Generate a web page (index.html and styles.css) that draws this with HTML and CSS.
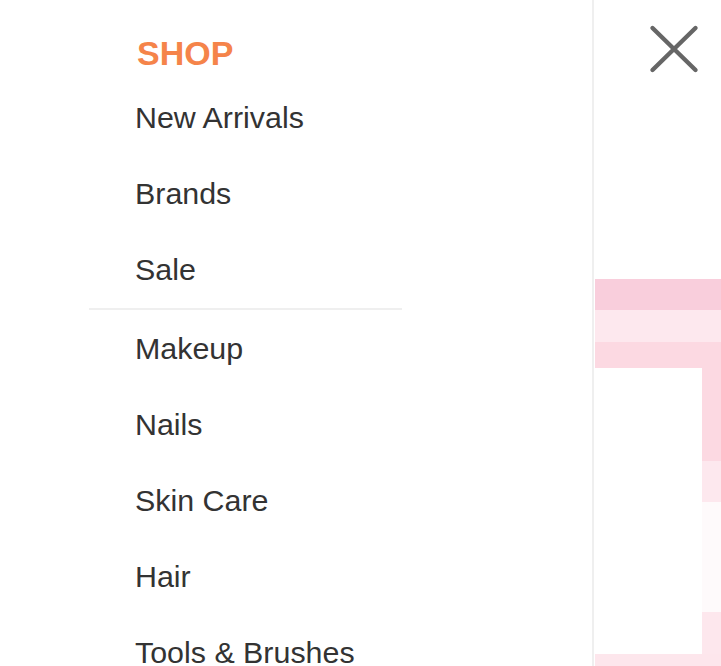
FILE: index.html
```html
<!DOCTYPE html>
<html lang="en">
<head>
    <meta charset="UTF-8"/>
    <title>Shop Menu</title>
    <link rel="stylesheet" href="styles.css">
</head>
<body>
<div class="drawer">
    <nav class="menu-panel">
        <h2 class="menu-title">SHOP</h2>
        <ul class="menu-list">
            <li><a href="#">New Arrivals</a></li>
            <li><a href="#">Brands</a></li>
            <li><a href="#">Sale</a></li>
        </ul>
        <hr class="menu-divider"/>
        <ul class="menu-list">
            <li><a href="#">Makeup</a></li>
            <li><a href="#">Nails</a></li>
            <li><a href="#">Skin Care</a></li>
            <li><a href="#">Hair</a></li>
            <li><a href="#">Tools &amp; Brushes</a></li>
        </ul>
    </nav>

    <aside class="backdrop">
        <div class="close-row">
            <button class="close-btn" type="button" aria-label="Close menu">
                <svg width="56" height="56" viewBox="0 0 56 56">
                    <path d="M6.5 7 L49.5 49 M49.5 7 L6.5 49" stroke="#666" stroke-width="4.4" stroke-linecap="round" fill="none"/>
                </svg>
            </button>
        </div>
        <div class="banner">
            <div class="band band-dark"></div>
            <div class="band band-light"></div>
            <div class="band band-mid"></div>
            <div class="banner-body">
                <div class="banner-card"></div>
                <div class="banner-edge">
                    <div class="edge edge-mid"></div>
                    <div class="edge edge-light"></div>
                    <div class="edge edge-pale"></div>
                    <div class="edge edge-light2"></div>
                </div>
            </div>
            <div class="band band-bottom"></div>
        </div>
    </aside>
</div>
</body>
</html>
```

FILE: styles.css
```css
body {
    margin: 0;
    font-family: 'Liberation Sans', Arial, sans-serif;
    background-color: white;
    overflow: hidden;
}

.drawer {
    display: flex;
    height: 666px;
}

.menu-panel {
    width: 592px;
    flex-shrink: 0;
    border-right: 2px solid #efefef;
    padding-top: 33px;
    box-sizing: content-box;
}

.menu-title {
    margin: 0 0 6px 137px;
    font-size: 34px;
    line-height: 40px;
    font-weight: bold;
    color: #f5844a;
}

.menu-list {
    list-style: none;
    margin: 0 0 0 89px;
    padding: 0;
    width: 313px;
}

.menu-list li a {
    display: block;
    padding: 20px 0 20px 46px;
    font-size: 30.4px;
    line-height: 36px;
    color: #333;
    text-decoration: none;
}

.menu-divider {
    margin: 1px 0 0 89px;
    width: 313px;
    height: 2px;
    border: none;
    background-color: #efefef;
}

.backdrop {
    flex: 1;
    display: flex;
    flex-direction: column;
    padding-left: 1px;
}

.close-row {
    height: 279px;
    padding: 21px 0 0 51px;
    box-sizing: border-box;
}

.close-btn {
    display: block;
    width: 56px;
    height: 56px;
    padding: 0;
    border: none;
    background: none;
    cursor: pointer;
}

.close-btn svg {
    display: block;
}

.banner {
    display: flex;
    flex-direction: column;
}

.band-dark {
    height: 31px;
    background-color: #f9cedc;
}

.band-light {
    height: 32px;
    background-color: #fde8ee;
}

.band-mid {
    height: 26px;
    background-color: #fcd9e2;
}

.banner-body {
    display: flex;
    height: 286px;
}

.banner-card {
    width: 107px;
    background-color: white;
}

.banner-edge {
    flex: 1;
    display: flex;
    flex-direction: column;
}

.edge-mid {
    height: 93px;
    background-color: #fcd9e2;
}

.edge-light {
    height: 41px;
    background-color: #fde8ee;
}

.edge-pale {
    height: 110px;
    background-color: #fefafb;
}

.edge-light2 {
    height: 42px;
    background-color: #fde7ed;
}

.band-bottom {
    height: 12px;
    background-color: #fde6ec;
}
```
